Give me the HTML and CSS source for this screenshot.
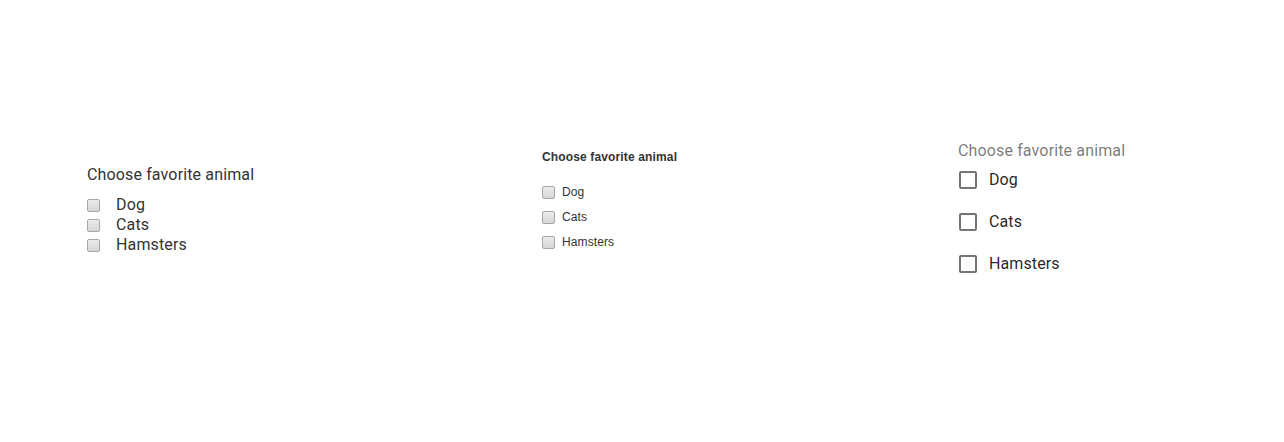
FILE: index.html
```html
<!DOCTYPE html>
<html>
<head>
<meta charset="utf-8">
<link rel="stylesheet" href="styles.css">
</head>
<body>
<div class="page">
  <fieldset class="group group-plain">
    <legend class="plain-title">Choose favorite animal</legend>
    <label class="plain-row"><input type="checkbox" class="box"><span class="plain-text">Dog</span></label>
    <label class="plain-row"><input type="checkbox" class="box"><span class="plain-text">Cats</span></label>
    <label class="plain-row"><input type="checkbox" class="box"><span class="plain-text">Hamsters</span></label>
  </fieldset>

  <fieldset class="group group-bold">
    <legend class="bold-title">Choose favorite animal</legend>
    <label class="bold-row"><input type="checkbox" class="box"><span class="bold-text">Dog</span></label>
    <label class="bold-row"><input type="checkbox" class="box"><span class="bold-text">Cats</span></label>
    <label class="bold-row"><input type="checkbox" class="box"><span class="bold-text">Hamsters</span></label>
  </fieldset>

  <fieldset class="group group-mui">
    <legend class="mui-title">Choose favorite animal</legend>
    <label class="mui-row">
      <span class="mui-control">
        <svg class="mui-icon" viewBox="0 0 24 24" width="24" height="24"><path d="M19 5v14H5V5h14m0-2H5c-1.1 0-2 .9-2 2v14c0 1.1.9 2 2 2h14c1.1 0 2-.9 2-2V5c0-1.1-.9-2-2-2z"/></svg>
      </span>
      <span class="mui-text">Dog</span>
    </label>
    <label class="mui-row">
      <span class="mui-control">
        <svg class="mui-icon" viewBox="0 0 24 24" width="24" height="24"><path d="M19 5v14H5V5h14m0-2H5c-1.1 0-2 .9-2 2v14c0 1.1.9 2 2 2h14c1.1 0 2-.9 2-2V5c0-1.1-.9-2-2-2z"/></svg>
      </span>
      <span class="mui-text">Cats</span>
    </label>
    <label class="mui-row">
      <span class="mui-control">
        <svg class="mui-icon" viewBox="0 0 24 24" width="24" height="24"><path d="M19 5v14H5V5h14m0-2H5c-1.1 0-2 .9-2 2v14c0 1.1.9 2 2 2h14c1.1 0 2-.9 2-2V5c0-1.1-.9-2-2-2z"/></svg>
      </span>
      <span class="mui-text">Hamsters</span>
    </label>
  </fieldset>
</div>
</body>
</html>
```

FILE: styles.css
```css
html, body {
  margin: 0;
  padding: 0;
  background: #ffffff;
}

.page {
  width: 1284px;
  height: 442px;
  display: grid;
  grid-template-columns: 455px 415px 1fr;
  align-items: start;
  padding-left: 87px;
  box-sizing: border-box;
}

.group {
  margin: 0;
  padding: 0;
  border: 0;
  min-width: 0;
  display: flex;
  flex-direction: column;
  align-items: flex-start;
}

legend {
  padding: 0;
  float: left;
  width: 100%;
}

/* checkbox look */
.box {
  appearance: none;
  -webkit-appearance: none;
  margin: 0 0 0 1px;
  width: 13px;
  height: 13px;
  box-sizing: border-box;
  border: 1px solid #a6a6a6;
  border-radius: 2px;
  background: linear-gradient(#ececec, #d6d6d6);
  flex: none;
}

/* column 1 */
.group-plain {
  padding-top: 165px;
}
.plain-title {
  font-family: Roboto, "Liberation Sans", sans-serif;
  font-size: 16px;
  line-height: 19px;
  letter-spacing: 0.14px;
  color: #333333;
  margin-bottom: 11px;
}
.plain-row {
  display: flex;
  align-items: center;
  height: 20px;
  font-family: Roboto, "Liberation Sans", sans-serif;
  font-size: 16px;
  letter-spacing: 0.14px;
  color: #333333;
}
.group-plain .box {
  margin-left: 0;
}
.plain-text {
  margin-left: 16px;
  line-height: 20px;
}

/* column 2 */
.group-bold {
  padding-top: 150px;
}
.bold-title {
  font-family: "Liberation Sans", Arial, sans-serif;
  font-size: 12px;
  font-weight: bold;
  line-height: 14px;
  letter-spacing: 0.14px;
  color: #333333;
  margin-bottom: 16px;
}
.bold-row {
  display: flex;
  align-items: center;
  height: 25px;
  font-family: "Liberation Sans", Arial, sans-serif;
  font-size: 12px;
  letter-spacing: 0.1px;
  color: #333333;
}
.group-bold .box {
  margin-left: 0;
  margin-top: -1px;
}
.bold-text {
  margin-left: 7px;
  margin-top: -1px;
}

/* column 3 */
.group-mui {
  padding-top: 143px;
  padding-left: 1px;
}
.mui-title {
  font-family: Roboto, "Liberation Sans", sans-serif;
  font-size: 16px;
  line-height: 16px;
  letter-spacing: 0.14px;
  color: rgba(0, 0, 0, 0.54);
}
.mui-row {
  display: flex;
  align-items: center;
  height: 42px;
  margin-left: -11px;
  font-family: Roboto, "Liberation Sans", sans-serif;
  font-size: 16px;
  letter-spacing: 0.1px;
  color: rgba(0, 0, 0, 0.87);
}
.mui-control {
  display: flex;
  padding: 9px;
}
.mui-icon {
  display: block;
  fill: rgba(0, 0, 0, 0.54);
}
.mui-text {
  line-height: 24px;
}
```
